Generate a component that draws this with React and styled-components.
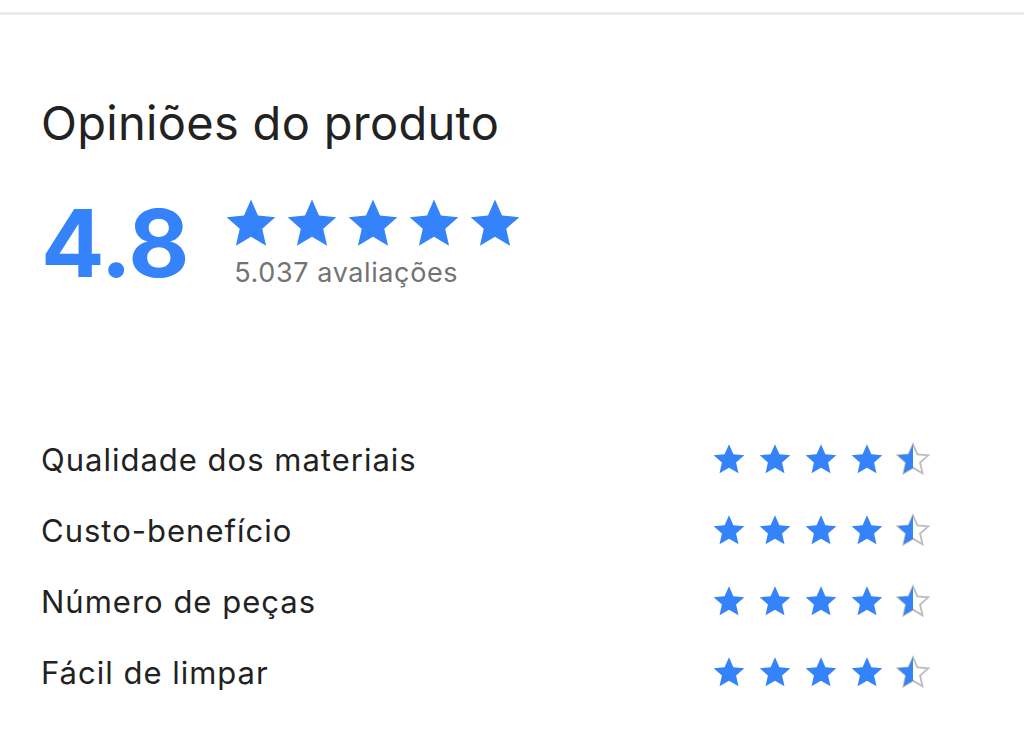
import React from "react";
import styled, { createGlobalStyle } from "styled-components";

const Global = createGlobalStyle`
  html, body { margin: 0; padding: 0; background: #fff; }
  body { font-family: Inter, "Open Sans", sans-serif; -webkit-font-smoothing: antialiased; }
`;

const Page = styled.div`
  width: 1024px;
  height: 729px;
  background: #fff;
  padding-top: 12px;
  box-sizing: border-box;
  overflow: hidden;
`;

const Divider = styled.div`
  height: 3px;
  background: #ebebeb;
`;

const Section = styled.section`
  padding: 0 94px 0 41px;
`;

const Title = styled.h2`
  margin: 83px 0 0;
  font-weight: 400;
  font-size: 47px;
  line-height: 50px;
  letter-spacing: 0.3px;
  color: #222;
`;

const Summary = styled.div`
  display: flex;
  align-items: flex-start;
  gap: 36px;
  margin-top: 48px;
`;

const Average = styled.div`
  font-weight: 700;
  font-size: 94px;
  line-height: 94px;
  color: #3483fa;
  letter-spacing: -1px;
`;

const SummaryRight = styled.div`
  display: flex;
  flex-direction: column;
`;

const StarRow = styled.div`
  display: flex;
  gap: ${(p) => p.$gap}px;
`;

const Count = styled.div`
  margin-top: 6px;
  margin-left: 10px;
  font-size: 27px;
  line-height: 34px;
  letter-spacing: 0.6px;
  color: #737373;
`;

const Attributes = styled.ul`
  list-style: none;
  margin: 152px 0 0;
  padding: 0;
  display: flex;
  flex-direction: column;
  gap: 40px;
`;

const Attribute = styled.li`
  display: grid;
  grid-template-columns: 1fr auto;
  align-items: center;
  height: 31px;
`;

const Label = styled.span`
  font-size: 31px;
  line-height: 31px;
  letter-spacing: 1px;
  color: #222;
`;

const STAR =
  "M12 1.6l3.1 7.1 7.7.7-5.8 5.1 1.7 7.6L12 18.1l-6.7 4 1.7-7.6-5.8-5.1 7.7-.7z";

function Star({ size, fill = 1, id }) {
  if (fill >= 1) {
    return (
      <svg width={size} height={size} viewBox="0 0 24 24">
        <path d={STAR} fill="#3483fa" />
      </svg>
    );
  }
  return (
    <svg width={size} height={size} viewBox="0 0 24 24">
      <defs>
        <clipPath id={id}>
          <rect x="0" y="0" width={24 * fill} height="24" />
        </clipPath>
      </defs>
      <path d={STAR} fill="none" stroke="#bdbdbd" strokeWidth="1.3" strokeLinejoin="miter" />
      <path d={STAR} fill="#3483fa" clipPath={`url(#${id})`} />
    </svg>
  );
}

const rows = [
  "Qualidade dos materiais",
  "Custo-benefício",
  "Número de peças",
  "Fácil de limpar",
];

export default function App() {
  return (
    <>
      <Global />
      <Page>
        <Divider />
        <Section>
          <Title>Opiniões do produto</Title>
          <Summary>
            <Average>4.8</Average>
            <SummaryRight>
              <StarRow $gap={7}>
                {[0, 1, 2, 3, 4].map((i) => (
                  <Star key={i} size={54} />
                ))}
              </StarRow>
              <Count>5.037 avaliações</Count>
            </SummaryRight>
          </Summary>
          <Attributes>
            {rows.map((r, ri) => (
              <Attribute key={r}>
                <Label>{r}</Label>
                <StarRow $gap={12}>
                  {[0, 1, 2, 3].map((i) => (
                    <Star key={i} size={34} />
                  ))}
                  <Star size={34} fill={0.5} id={`half-${ri}`} />
                </StarRow>
              </Attribute>
            ))}
          </Attributes>
        </Section>
      </Page>
    </>
  );
}
